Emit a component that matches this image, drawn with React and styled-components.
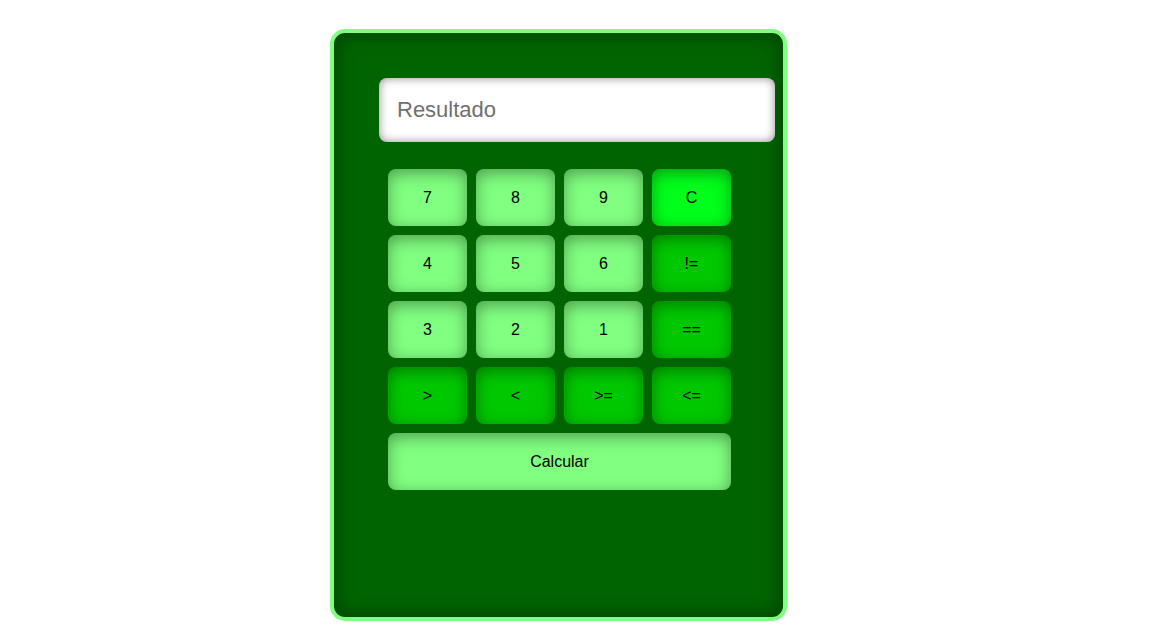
import React from 'react'
import styled, { createGlobalStyle } from 'styled-components'

const GlobalStyle = createGlobalStyle`
  body {
    margin: 0;
    background: #ffffff;
    font-family: "Liberation Sans", Arial, sans-serif;
  }
`

const Page = styled.div`
  display: flex;
  padding: 29px 0 0 330px;
  min-height: 100vh;
  box-sizing: border-box;
`

const Calculator = styled.div`
  width: 449px;
  height: 584px;
  box-sizing: content-box;
  border: 4px solid #80ff80;
  border-radius: 15px;
  background-color: #006400;
  box-shadow: inset 0 0 20px rgba(0, 0, 0, 0.4);
  display: flex;
  flex-direction: column;
`

const Inner = styled.div`
  padding: 45px 0 0 45px;
  display: flex;
  flex-direction: column;
  gap: 27px;
`

const Display = styled.input`
  width: 396px;
  height: 64px;
  box-sizing: border-box;
  border: none;
  border-radius: 8px;
  background: #ffffff;
  box-shadow: inset 0 0 10px rgba(0, 0, 0, 0.45);
  padding: 0 18px;
  font-family: "Liberation Sans", Arial, sans-serif;
  font-size: 22px;
  color: #333;
  outline: none;

  &::placeholder {
    color: #707070;
  }
`

const Keys = styled.div`
  display: grid;
  grid-template-columns: repeat(4, 79px);
  grid-auto-rows: 57px;
  gap: 9px;
  padding-left: 9px;
`

const tones = {
  num: '#80ff80',
  clear: '#00ff1a',
  op: '#00c800',
}

const Key = styled.button`
  border: none;
  border-radius: 8px;
  background-color: ${p => tones[p.$tone]};
  box-shadow: inset 0 4px 16px rgba(0, 0, 0, 0.38);
  font-family: "Liberation Sans", Arial, sans-serif;
  font-size: 16px;
  color: #000;
  cursor: pointer;
  grid-column: ${p => (p.$wide ? 'span 4' : 'auto')};
`

const rows = [
  [['7', 'num'], ['8', 'num'], ['9', 'num'], ['C', 'clear']],
  [['4', 'num'], ['5', 'num'], ['6', 'num'], ['!=', 'op']],
  [['3', 'num'], ['2', 'num'], ['1', 'num'], ['==', 'op']],
  [['>', 'op'], ['<', 'op'], ['>=', 'op'], ['<=', 'op']],
]

export default function App() {
  return (
    <>
      <GlobalStyle />
      <Page>
        <Calculator>
          <Inner>
            <Display placeholder="Resultado" readOnly />
            <Keys>
              {rows.flat().map(([label, tone]) => (
                <Key key={label} $tone={tone}>{label}</Key>
              ))}
              <Key $tone="num" $wide>Calcular</Key>
            </Keys>
          </Inner>
        </Calculator>
      </Page>
    </>
  )
}
